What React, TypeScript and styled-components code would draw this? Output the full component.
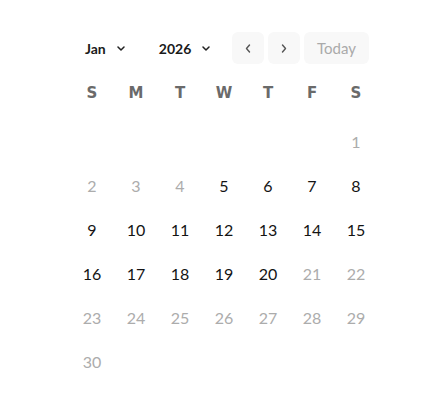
import React from "react";
import styled, { createGlobalStyle } from "styled-components";

const Global = createGlobalStyle`
  html, body { margin: 0; padding: 0; background: #fff; }
  body { font-family: "Lato", "Noto Sans", sans-serif; }
`;

const Wrap = styled.div`
  width: 308px;
  margin: 32px auto 0;
`;

const Header = styled.div`
  display: flex;
  align-items: center;
  height: 32px;
  padding: 0 9px 0 15px;
`;

const Select = styled.button<{ $gapLeft?: number }>`
  display: flex;
  align-items: center;
  gap: 11px;
  border: 0;
  background: transparent;
  padding: 0;
  margin-left: ${(p) => p.$gapLeft ?? 0}px;
  font-family: "Lato", "Noto Sans", sans-serif;
  font-size: 14px;
  font-weight: 700;
  color: #1a1a1a;
  cursor: pointer;
`;

const Nav = styled.div`
  display: flex;
  gap: 4px;
  margin-left: auto;
`;

const NavButton = styled.button<{ $wide?: boolean }>`
  height: 32px;
  width: ${(p) => (p.$wide ? "65px" : "32px")};
  border: 0;
  border-radius: 6px;
  background: #f8f8f8;
  display: flex;
  align-items: center;
  justify-content: center;
  padding: 0;
  font-family: "Lato", "Noto Sans", sans-serif;
  font-size: 15px;
  font-weight: 400;
  color: #aaaaaa;
`;

const Grid = styled.div`
  display: grid;
  grid-template-columns: repeat(7, 44px);
  margin-top: 7px;
`;

const WeekDay = styled.div`
  height: 44px;
  display: flex;
  align-items: center;
  justify-content: center;
  font-family: "DejaVu Sans", "Noto Sans", sans-serif;
  font-weight: 700;
  font-size: 15px;
  color: #6a6a6a;
  margin-bottom: 4px;
`;

const Day = styled.div<{ $muted?: boolean }>`
  height: 44px;
  display: flex;
  align-items: center;
  justify-content: center;
  font-size: 16px;
  color: ${(p) => (p.$muted ? "#acacac" : "#141414")};
`;

const Chevron = ({ dir }: { dir: "down" | "left" | "right" }) => {
  if (dir === "down")
    return (
      <svg width="8" height="5" viewBox="0 0 8 5" fill="none">
        <path d="M1 1l3 3 3-3" stroke="#222" strokeWidth="1.5" strokeLinecap="round" strokeLinejoin="round" />
      </svg>
    );
  const d = dir === "left" ? "M4.5 1L1.5 4.5 4.5 8" : "M1.5 1l3 3.5-3 3.5";
  return (
    <svg width="6" height="9" viewBox="0 0 6 9" fill="none">
      <path d={d} stroke="#555" strokeWidth="1.4" strokeLinecap="round" strokeLinejoin="round" />
    </svg>
  );
};

const weekdays = ["S", "M", "T", "W", "T", "F", "S"];

export default function App() {
  const cells: (number | null)[] = [...Array(6).fill(null)];
  for (let i = 1; i <= 30; i++) cells.push(i);
  const isActive = (n: number) => n >= 5 && n <= 20;
  return (
    <>
      <Global />
      <Wrap>
        <Header>
          <Select>
            Jan <Chevron dir="down" />
          </Select>
          <Select $gapLeft={34}>
            2026 <Chevron dir="down" />
          </Select>
          <Nav>
            <NavButton aria-label="Previous month">
              <Chevron dir="left" />
            </NavButton>
            <NavButton aria-label="Next month">
              <Chevron dir="right" />
            </NavButton>
            <NavButton $wide>Today</NavButton>
          </Nav>
        </Header>
        <Grid>
          {weekdays.map((w, i) => (
            <WeekDay key={i}>{w}</WeekDay>
          ))}
          {cells.map((n, i) =>
            n === null ? <Day key={i} /> : <Day key={i} $muted={!isActive(n)}>{n}</Day>
          )}
        </Grid>
      </Wrap>
    </>
  );
}
